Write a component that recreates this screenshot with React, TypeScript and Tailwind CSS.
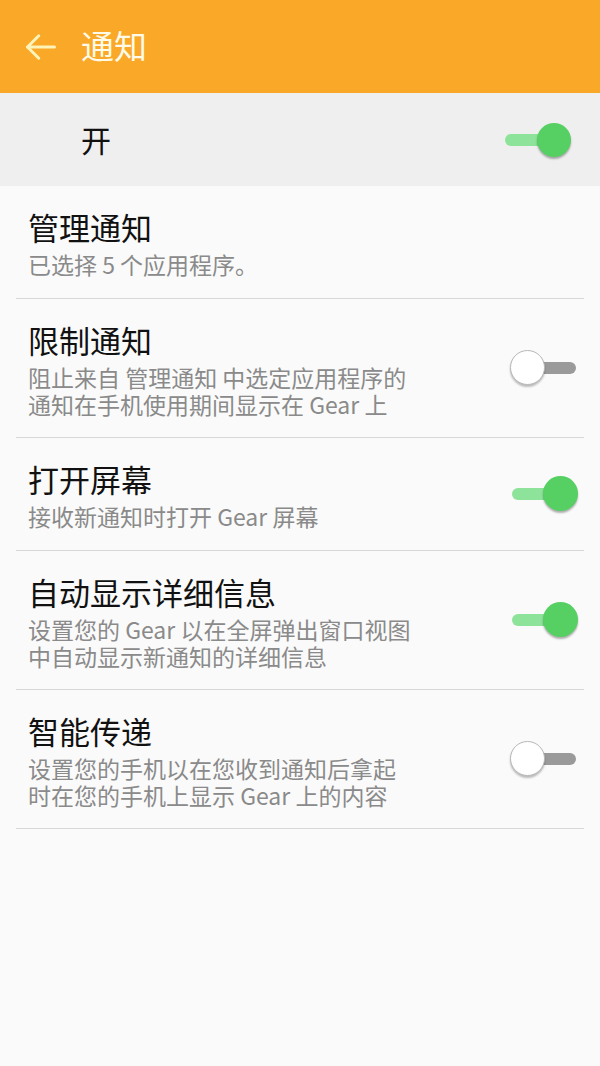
import React from "react";

function Toggle({ on, master = false }: { on: boolean; master?: boolean }) {
  return (
    <div className={`relative ${master ? "w-[68px] h-[34px]" : "w-[68px] h-[36px]"} shrink-0`}>
      <div
        className={`absolute left-[2px] right-[2px] top-1/2 -translate-y-1/2 h-[12px] rounded-full ${
          on ? "bg-[#8de39a]" : "bg-[#9a9a9a]"
        }`}
      />
      <div
        className={`absolute top-0 ${on ? "right-0" : "left-0"} ${
          master ? "w-[34px] h-[34px]" : "w-[35px] h-[35px]"
        } rounded-full ${
          on
            ? "bg-[#56d063] shadow-[0_2px_2px_rgba(0,0,0,0.3)]"
            : "bg-white border border-[#b8b8b8] shadow-[0_2px_2px_rgba(0,0,0,0.25)]"
        }`}
      />
    </div>
  );
}

function Row({
  title,
  lines,
  toggle,
}: {
  title: string;
  lines: string[];
  toggle?: boolean;
}) {
  return (
    <div className="mx-[16px] border-b border-[#d7d7d7] flex items-center pl-[12px] pr-[6px]">
      <div className={`flex-1 pt-[22px] ${lines.length > 1 ? "pb-[19px]" : "pb-[20px]"}`}>
        <div className="text-[31px] leading-[38px] text-[#111111]">{title}</div>
        <p className="mt-[5px] text-[23px] leading-[27px] text-[#8a8a8a]">
          {lines.map((l, i) => (
            <React.Fragment key={i}>
              {i > 0 && <br />}
              {l}
            </React.Fragment>
          ))}
        </p>
      </div>
      {toggle !== undefined && <Toggle on={toggle} />}
    </div>
  );
}

export default function App() {
  return (
    <div
      className="w-[600px] h-[1066px] bg-[#fafafa] overflow-hidden"
      style={{ fontFamily: '"Noto Sans CJK SC", Roboto, "Noto Sans", sans-serif' }}
    >
      <div className="h-[93px] bg-[#f9a828] flex items-center">
        <svg
          width="36"
          height="36"
          viewBox="0 0 24 24"
          className="ml-[23px]"
          fill="none"
          stroke="#fff4b8"
          strokeWidth="2"
          strokeLinecap="round"
          strokeLinejoin="round"
        >
          <path d="M21 12H3" />
          <path d="M10.5 4.5L3 12l7.5 7.5" />
        </svg>
        <div className="ml-[22px] text-[33px] leading-none text-[#fffbe8] -mt-[2px]">通知</div>
      </div>
      <div className="h-[93px] bg-[#efefef] flex items-center pl-[81px] pr-[29px]">
        <div className="flex-1 text-[30px] text-[#111111]">开</div>
        <Toggle on master />
      </div>
      <Row title="管理通知" lines={["已选择 5 个应用程序。"]} />
      <Row
        title="限制通知"
        lines={["阻止来自 管理通知 中选定应用程序的", "通知在手机使用期间显示在 Gear 上"]}
        toggle={false}
      />
      <Row title="打开屏幕" lines={["接收新通知时打开 Gear 屏幕"]} toggle={true} />
      <Row
        title="自动显示详细信息"
        lines={["设置您的 Gear 以在全屏弹出窗口视图", "中自动显示新通知的详细信息"]}
        toggle={true}
      />
      <Row
        title="智能传递"
        lines={["设置您的手机以在您收到通知后拿起", "时在您的手机上显示 Gear 上的内容"]}
        toggle={false}
      />
    </div>
  );
}
